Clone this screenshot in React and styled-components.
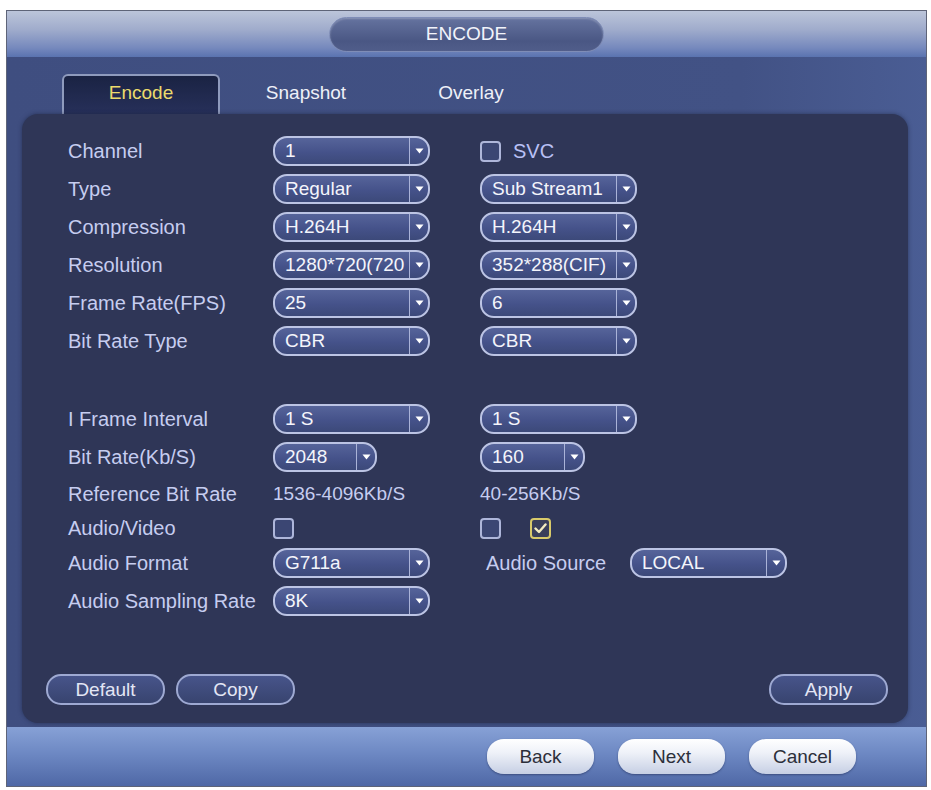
import React from 'react';
import styled, { createGlobalStyle } from 'styled-components';

const GlobalStyle = createGlobalStyle`
  html, body {
    margin: 0;
    padding: 0;
    background: #ffffff;
  }
  body {
    font-family: "Liberation Sans", Arial, sans-serif;
  }
`;

const Page = styled.div`
  padding: 10px 0 0 6px;
`;

const Window = styled.div`
  width: 921px;
  height: 777px;
  box-sizing: border-box;
  border: 1px solid #5e6478;
  display: flex;
  flex-direction: column;
  background: #415184;
`;

const TitleBar = styled.div`
  height: 46px;
  flex: none;
  display: flex;
  align-items: center;
  justify-content: center;
  background: linear-gradient(#bcc5da 0%, #a0accc 40%, #7689bd 80%, #5a73b0 100%);
`;

const TitlePill = styled.div`
  width: 275px;
  height: 35px;
  border-radius: 18px;
  border: 1px solid #7f8db7;
  background: linear-gradient(#65739f, #4a5784 70%, #505d8a);
  box-shadow: inset 0 1px 2px rgba(255, 255, 255, 0.25);
  display: flex;
  align-items: center;
  justify-content: center;
  color: #f2f4fb;
  font-size: 19px;
  box-sizing: border-box;
`;

const Body = styled.div`
  flex: 1;
  display: flex;
  flex-direction: column;
  padding: 17px 18px 4px 15px;
  background: linear-gradient(90deg, #3f4e80 0%, #425285 80%, #4a5d94 100%);
`;

const Tabs = styled.div`
  display: flex;
  gap: 7px;
  padding-left: 40px;
  height: 40px;
`;

const Tab = styled.div`
  width: 158px;
  box-sizing: border-box;
  display: flex;
  align-items: center;
  justify-content: center;
  font-size: 19px;
  padding-bottom: 4px;
  color: ${p => (p.$active ? '#ecdb6c' : '#eef0f8')};
  border-radius: 6px 6px 0 0;
  border: ${p => (p.$active ? '2px solid #8f9bbd' : '2px solid transparent')};
  border-bottom: none;
  background: ${p => (p.$active ? 'linear-gradient(#1a2343, #27305a)' : 'transparent')};
`;

const Panel = styled.div`
  flex: 1;
  display: flex;
  flex-direction: column;
  background: #2f3657;
  border-radius: 16px;
  padding: 18px 20px 18px 24px;
  box-shadow: 0 0 4px rgba(20, 25, 50, 0.5);
`;

const Form = styled.div`
  padding-left: 22px;
  display: flex;
  flex-direction: column;
`;

const Row = styled.div`
  display: grid;
  grid-template-columns: 205px 207px 1fr;
  align-items: center;
  height: ${p => p.$h || 38}px;
  margin-top: ${p => p.$gap || 0}px;
`;

const Label = styled.div`
  font-size: 20px;
  color: #c6cdf0;
  white-space: nowrap;
`;

const Value = styled.div`
  font-size: 19px;
  color: #c6cdf0;
  white-space: nowrap;
`;

const Cell = styled.div`
  display: flex;
  align-items: center;
  gap: ${p => p.$gap || 0}px;
  padding-left: ${p => p.$pad || 0}px;
`;

const SelectBox = styled.div`
  width: ${p => p.$w || 157}px;
  height: 30px;
  box-sizing: border-box;
  border: 2px solid #bcc4e4;
  border-radius: 14px;
  background: linear-gradient(#56649a, #45528a 55%, #3c4979);
  display: flex;
  align-items: stretch;
  overflow: hidden;
`;

const SelectText = styled.div`
  flex: 1;
  padding-left: 10px;
  font-size: 19px;
  line-height: 26px;
  color: #f4f5fb;
  white-space: nowrap;
  overflow: hidden;
`;

const SelectArrow = styled.div`
  width: 18px;
  border-left: 1px solid #aab3d8;
  display: flex;
  align-items: center;
  justify-content: center;
`;

const CheckBox = styled.div`
  width: 21px;
  height: 21px;
  box-sizing: border-box;
  border-radius: 4px;
  border: 2px solid ${p => (p.$checked ? '#d9ca6a' : '#aeb6da')};
  background: ${p => (p.$checked ? '#3a3f5a' : '#3b4673')};
  display: flex;
  align-items: center;
  justify-content: center;
`;

const CheckText = styled.span`
  font-size: 20px;
  color: #b9c0f5;
  margin-left: 12px;
`;

const InlineLabel = styled(Label)`
  width: 144px;
`;

const Actions = styled.div`
  margin-top: auto;
  display: flex;
  align-items: center;
  gap: 11px;
`;

const DarkButton = styled.div`
  width: 119px;
  height: 31px;
  box-sizing: border-box;
  border-radius: 15px;
  border: 2px solid #9ea9d2;
  background: linear-gradient(#47548a, #38446f);
  display: flex;
  align-items: center;
  justify-content: center;
  font-size: 19px;
  color: #e3e6f5;
  margin-left: ${p => (p.$push ? 'auto' : '0')};
`;

const BottomBar = styled.div`
  height: 59px;
  flex: none;
  display: flex;
  align-items: center;
  justify-content: flex-end;
  gap: 24px;
  padding-right: 70px;
  background: linear-gradient(#87a1d6 0%, #6d88c3 45%, #4f68a6 100%);
`;

const LightButton = styled.div`
  width: 107px;
  height: 35px;
  border-radius: 17px / 16px;
  background: linear-gradient(#ffffff 0%, #eef1f8 40%, #c6cfe4 100%);
  box-shadow: 0 1px 2px rgba(30, 40, 80, 0.5);
  display: flex;
  align-items: center;
  justify-content: center;
  font-size: 19px;
  color: #2c2f3a;
`;

const Arrow = () => (
  <svg width="9" height="6" viewBox="0 0 9 6">
    <path d="M0.5 0.5 H8.5 L4.5 5.5 Z" fill="#ffffff" />
  </svg>
);

const Check = () => (
  <svg width="13" height="11" viewBox="0 0 13 11">
    <path d="M1.5 5.5 L5 9 L11.5 1.5" stroke="#f3ecc0" strokeWidth="2.4" fill="none" strokeLinecap="round" strokeLinejoin="round" />
  </svg>
);

const Select = ({ value, w }) => (
  <SelectBox $w={w}>
    <SelectText>{value}</SelectText>
    <SelectArrow>
      <Arrow />
    </SelectArrow>
  </SelectBox>
);

const mainRows = [
  { label: 'Type', a: 'Regular', b: 'Sub Stream1' },
  { label: 'Compression', a: 'H.264H', b: 'H.264H' },
  { label: 'Resolution', a: '1280*720(720', b: '352*288(CIF)' },
  { label: 'Frame Rate(FPS)', a: '25', b: '6' },
  { label: 'Bit Rate Type', a: 'CBR', b: 'CBR' },
];

export default function App() {
  return (
    <>
      <GlobalStyle />
      <Page>
        <Window>
          <TitleBar>
            <TitlePill>ENCODE</TitlePill>
          </TitleBar>
          <Body>
            <Tabs>
              <Tab $active>Encode</Tab>
              <Tab>Snapshot</Tab>
              <Tab>Overlay</Tab>
            </Tabs>
            <Panel>
              <Form>
                <Row>
                  <Label>Channel</Label>
                  <Cell><Select value="1" /></Cell>
                  <Cell>
                    <CheckBox />
                    <CheckText>SVC</CheckText>
                  </Cell>
                </Row>
                {mainRows.map(r => (
                  <Row key={r.label}>
                    <Label>{r.label}</Label>
                    <Cell><Select value={r.a} /></Cell>
                    <Cell><Select value={r.b} /></Cell>
                  </Row>
                ))}
                <Row $gap={40}>
                  <Label>I Frame Interval</Label>
                  <Cell><Select value="1 S" /></Cell>
                  <Cell><Select value="1 S" /></Cell>
                </Row>
                <Row>
                  <Label>Bit Rate(Kb/S)</Label>
                  <Cell><Select value="2048" w={104} /></Cell>
                  <Cell><Select value="160" w={105} /></Cell>
                </Row>
                <Row $h={36}>
                  <Label>Reference Bit Rate</Label>
                  <Value>1536-4096Kb/S</Value>
                  <Value>40-256Kb/S</Value>
                </Row>
                <Row $h={32}>
                  <Label>Audio/Video</Label>
                  <Cell><CheckBox /></Cell>
                  <Cell $gap={29}>
                    <CheckBox />
                    <CheckBox $checked><Check /></CheckBox>
                  </Cell>
                </Row>
                <Row>
                  <Label>Audio Format</Label>
                  <Cell><Select value="G711a" /></Cell>
                  <Cell $pad={6}>
                    <InlineLabel>Audio Source</InlineLabel>
                    <Select value="LOCAL" />
                  </Cell>
                </Row>
                <Row>
                  <Label>Audio Sampling Rate</Label>
                  <Cell><Select value="8K" /></Cell>
                  <Cell />
                </Row>
              </Form>
              <Actions>
                <DarkButton>Default</DarkButton>
                <DarkButton>Copy</DarkButton>
                <DarkButton $push>Apply</DarkButton>
              </Actions>
            </Panel>
          </Body>
          <BottomBar>
            <LightButton>Back</LightButton>
            <LightButton>Next</LightButton>
            <LightButton>Cancel</LightButton>
          </BottomBar>
        </Window>
      </Page>
    </>
  );
}
